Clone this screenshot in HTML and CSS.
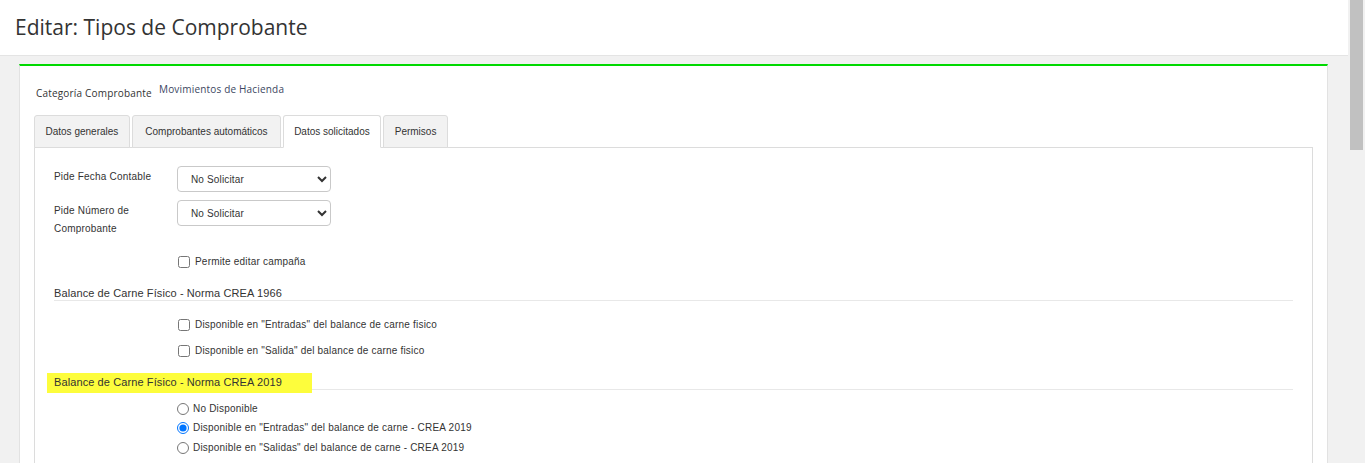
FILE: index.html
```html
<!DOCTYPE html>
<html lang="es">
<head>
<meta charset="utf-8">
<title>Editar: Tipos de Comprobante</title>
<link rel="stylesheet" href="styles.css">
</head>
<body>
<div class="viewport">
  <div class="page">
    <header class="page-header">
      <h1 class="page-title">Editar: Tipos de Comprobante</h1>
    </header>
    <div class="content">
      <div class="panel">
        <div class="info-row">
          <span class="info-label">Categoría Comprobante</span>
          <span class="info-value">Movimientos de Hacienda</span>
        </div>
        <ul class="tabs">
          <li class="tab">Datos generales</li>
          <li class="tab wide">Comprobantes automáticos</li>
          <li class="tab active">Datos solicitados</li>
          <li class="tab">Permisos</li>
        </ul>
        <div class="tab-content">
          <div class="form-row first">
            <label class="form-label">Pide Fecha Contable</label>
            <select class="form-select"><option>No Solicitar</option></select>
          </div>
          <div class="form-row second">
            <label class="form-label">Pide Número de Comprobante</label>
            <select class="form-select"><option>No Solicitar</option></select>
          </div>
          <label class="check-row permite"><input type="checkbox" class="check"> Permite editar campaña</label>

          <h3 class="section-title">Balance de Carne Físico - Norma CREA 1966</h3>
          <label class="check-row s1"><input type="checkbox" class="check"> Disponible en "Entradas" del balance de carne fisico</label>
          <label class="check-row s2"><input type="checkbox" class="check"> Disponible en "Salida" del balance de carne fisico</label>

          <h3 class="section-title second-title"><span class="highlight">Balance de Carne Físico - Norma CREA 2019</span></h3>
          <div class="radio-group">
            <label class="radio-row"><input type="radio" name="crea" class="radio"> No Disponible</label>
            <label class="radio-row"><input type="radio" name="crea" class="radio" checked> Disponible en "Entradas" del balance de carne - CREA 2019</label>
            <label class="radio-row"><input type="radio" name="crea" class="radio"> Disponible en "Salidas" del balance de carne - CREA 2019</label>
          </div>
        </div>
      </div>
    </div>
  </div>
  <div class="scrollbar"><div class="scroll-thumb"></div></div>
</div>
</body>
</html>
```

FILE: styles.css
```css
* { box-sizing: border-box; }
html, body {
  margin: 0;
  padding: 0;
  height: 463px;
  overflow: hidden;
  background: #f1f1f1;
}
body {
  font-family: "Liberation Sans", Arial, sans-serif;
  color: #333;
}
.viewport {
  display: flex;
  height: 463px;
}
.page {
  width: 1348px;
  flex: 0 0 1348px;
  background: #f1f1f1;
}
.page-header {
  height: 56px;
  background: #fff;
  border-bottom: 1px solid #e4e4e4;
  padding-left: 15px;
}
.page-title {
  margin: 0;
  font-family: "Open Sans", sans-serif;
  font-weight: 400;
  font-size: 21px;
  line-height: 55px;
  color: #333;
}
.content {
  padding: 8px 20px 0 19px;
}
.panel {
  background: #fff;
  border-top: 2px solid #00d900;
  border-left: 1px solid #e2e2e2;
  border-right: 1px solid #e2e2e2;
  padding: 0 14px;
  height: 420px;
}
.info-row {
  display: flex;
  align-items: flex-start;
  padding-top: 15px;
  margin-left: 2px;
  font-family: "Open Sans", sans-serif;
  font-size: 10px;
  letter-spacing: 0.18px;
}
.info-label {
  width: 123px;
  line-height: 16px;
  padding-top: 4px;
  color: #333;
}
.info-value {
  line-height: 16px;
  color: #3c465f;
}
.tabs {
  list-style: none;
  margin: 14px 0 0 0;
  padding: 0;
  display: flex;
  gap: 2px;
  position: relative;
  z-index: 1;
}
.tab {
  height: 33px;
  line-height: 31px;
  padding: 0 10.5px;
  font-size: 10px;
  color: #333;
  background: #f2f2f2;
  border: 1px solid #dcdcdc;
  border-radius: 3px 3px 0 0;
}
.tab.wide {
  padding: 0 12px 0 12.5px;
}
.tab.active {
  background: #fff;
  border-bottom-color: #fff;
}
.tab-content {
  margin-top: -1px;
  border: 1px solid #dcdcdc;
  border-bottom: none;
  padding: 18px 19px 0 19px;
  height: 330px;
}
.form-row {
  display: flex;
  align-items: flex-start;
}
.form-row.second { margin-top: 8px; }
.form-label {
  width: 123px;
  flex: 0 0 123px;
  padding-top: 2px;
  font-size: 10px;
  letter-spacing: 0.2px;
  line-height: 18px;
  color: #333;
  padding-right: 20px;
}
.form-select {
  width: 154px;
  height: 26px;
  border: 1px solid #c9c9c9;
  border-radius: 4px;
  background-color: #fff;
  font-family: "Liberation Sans", Arial, sans-serif;
  font-size: 10px;
  letter-spacing: 0.15px;
  color: #333;
  padding-left: 9px;
  margin: 0;
}
.check-row, .radio-row {
  display: flex;
  align-items: center;
  margin-left: 123px;
  font-size: 10px;
  letter-spacing: 0.2px;
  line-height: 18px;
  height: 18px;
  color: #333;
}
.check {
  width: 12px;
  height: 12px;
  margin: 0 5px 0 1px;
}
.radio {
  width: 12px;
  height: 12px;
  margin: 0 4px 0 0;
}
.check-row.permite { margin-top: 15px; }
.check-row.s1 { margin-top: 15px; }
.check-row.s2 { margin-top: 8px; }
.section-title {
  margin: 15px 0 0 0;
  font-size: 11px;
  letter-spacing: 0.1px;
  font-weight: 400;
  line-height: 14px;
  color: #333;
  border-bottom: 1px solid #e8e8e8;
}
.highlight {
  background: #fdfd3c;
  padding: 3px 30px 5px 7px;
  margin-left: -7px;
}
.radio-group {
  margin-top: 9px;
}
.radio-row {
  height: 19px;
  line-height: 19px;
}
.radio-row:nth-child(3) { margin-top: 1px; }
.scrollbar {
  flex: 0 0 17px;
  width: 17px;
  background: #f1f1f1;
  padding: 0 2px;
}
.scroll-thumb {
  width: 13px;
  height: 150px;
  background: #c1c1c1;
}
```
